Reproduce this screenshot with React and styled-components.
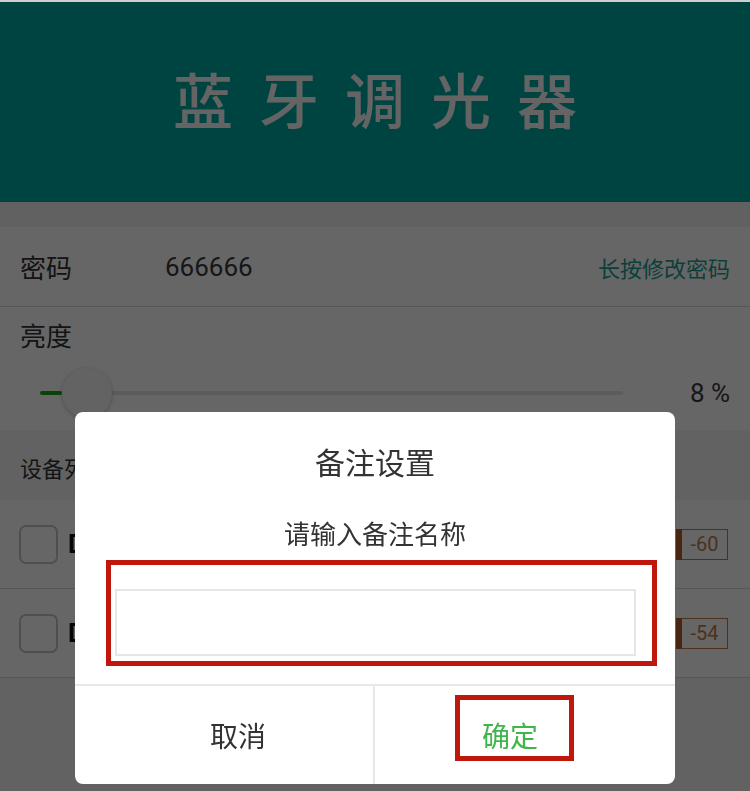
import React from "react";
import styled, { createGlobalStyle } from "styled-components";

const GlobalStyle = createGlobalStyle`
  html, body {
    margin: 0;
    padding: 0;
    background: #f4f4f4;
  }
  body {
    font-family: Roboto, "Noto Sans CJK SC", "Noto Sans", sans-serif;
    color: #333;
  }
  * { box-sizing: border-box; }
`;

const Page = styled.div`
  width: 750px;
  min-height: 791px;
  display: flex;
  flex-direction: column;
  background: #f4f4f4;
  border-top: 2px solid #cfcfcf;
`;

const Header = styled.div`
  height: 200px;
  background: #00aba4;
  display: flex;
  align-items: center;
  justify-content: center;
  padding-bottom: 10px;
`;

const Title = styled.h1`
  margin: 0;
  padding-left: 26px;
  font-family: "Noto Sans CJK SC", sans-serif;
  font-size: 60px;
  font-weight: 500;
  letter-spacing: 26px;
  color: #fafafa;
`;

const Strip = styled.div`
  height: 25px;
  background: #f2f2f2;
`;

const Row = styled.div`
  background: #fff;
  display: flex;
  align-items: center;
  padding: 0 20px;
  height: ${(p) => p.h}px;
  border-bottom: ${(p) => (p.line ? "1px solid #d8d8d8" : "none")};
`;

const Label = styled.span`
  font-family: "Noto Sans CJK SC", sans-serif;
  font-size: 26px;
  color: #333;
  width: 145px;
`;

const Value = styled.span`
  font-family: Roboto, sans-serif;
  font-size: 26px;
  color: #3a3a3a;
  flex: 1;
`;

const Link = styled.span`
  font-family: "Noto Sans CJK SC", sans-serif;
  font-size: 22px;
  color: #1a9e95;
`;

const Brightness = styled.div`
  background: #fff;
  height: 123px;
  padding: 9px 20px 0 20px;
  display: flex;
  flex-direction: column;
`;

const SliderLine = styled.div`
  display: flex;
  align-items: center;
  height: 50px;
  margin-top: 15px;
`;

const Track = styled.div`
  position: relative;
  margin-left: 20px;
  width: 583px;
  height: 4px;
  background: #e6e6e6;
  border-radius: 2px;
`;

const Fill = styled.div`
  height: 4px;
  background: #1aa81a;
  border-radius: 2px;
`;

const Thumb = styled.div`
  position: absolute;
  top: -23px;
  width: 50px;
  height: 50px;
  border-radius: 50%;
  background: #f7f7f7;
  box-shadow: 0 1px 4px rgba(0, 0, 0, 0.25);
`;

const Percent = styled.span`
  margin-left: auto;
  font-family: Roboto, sans-serif;
  font-size: 26px;
  color: #3a3a3a;
`;

const ListHeader = styled.div`
  height: 70px;
  background: #f5f5f5;
  display: flex;
  align-items: center;
  padding: 0 20px;
  font-family: "Noto Sans CJK SC", sans-serif;
  font-size: 22px;
  color: #333;
  padding-top: 4px;
`;

const Checkbox = styled.div`
  width: 39px;
  height: 39px;
  border: 2px solid #c6c6c6;
  border-radius: 7px;
  margin-left: -1px;
`;

const DeviceName = styled.span`
  margin-left: 10px;
  flex: 1;
  font-family: Roboto, sans-serif;
  font-weight: 700;
  font-size: 26px;
  color: #111;
`;

const Rssi = styled.div`
  display: flex;
  height: 31px;
  margin-right: 2px;
`;

const RssiBar = styled.div`
  width: 6px;
  background: #b4602c;
`;

const RssiValue = styled.div`
  width: 46px;
  border: 1px solid #c07a4a;
  border-left: none;
  display: flex;
  align-items: center;
  justify-content: center;
  font-family: Roboto, sans-serif;
  font-size: 20px;
  color: #c07a4a;
`;

const Overlay = styled.div`
  position: fixed;
  top: 2px;
  left: 0;
  right: 0;
  bottom: 0;
  background: rgba(0, 0, 0, 0.6);
  display: flex;
  flex-direction: column;
  align-items: center;
  padding-top: 410px;
`;

const Dialog = styled.div`
  width: 600px;
  height: 372px;
  background: #fff;
  border-radius: 8px;
  display: flex;
  flex-direction: column;
  font-family: "Noto Sans CJK SC", sans-serif;
  overflow: hidden;
`;

const DialogTitle = styled.div`
  margin-top: 30px;
  line-height: 38px;
  font-size: 30px;
  text-align: center;
  color: #333;
`;

const DialogText = styled.div`
  margin-top: 35px;
  line-height: 36px;
  font-size: 26px;
  text-align: center;
  color: #333;
`;

const Mark = styled.div`
  border: 5px solid #c0170c;
`;

const InputMark = styled(Mark)`
  margin: 9px 0 0 31px;
  width: 551px;
  padding: 24px 16px 5px 4px;
`;

const NameInput = styled.input`
  display: block;
  width: 100%;
  height: 67px;
  border: 2px solid #e6e6e6;
  outline: none;
  font-size: 24px;
  padding: 0 12px;
`;

const Buttons = styled.div`
  margin-top: 18px;
  border-top: 2px solid #e8e8e8;
  flex: 1;
  display: flex;
`;

const Button = styled.div`
  flex: 0 0 50%;
  display: flex;
  justify-content: center;
  align-items: ${(p) => (p.primary ? "flex-start" : "center")};
  padding: ${(p) => (p.primary ? "9px 21px 0 0" : "0 0 0 28px")};
  border-right: ${(p) => (p.primary ? "none" : "2px solid #e8e8e8")};
  font-size: 28px;
  line-height: 36px;
  color: ${(p) => (p.primary ? "#3fb54c" : "#333")};
`;

const ButtonMark = styled(Mark)`
  height: 66px;
  padding: 17px 31px 0 22px;
`;

const devices = [
  { name: "DIMMER-01", rssi: -60 },
  { name: "DIMMER-02", rssi: -54 },
];

export default function App() {
  const level = 8;
  return (
    <>
      <GlobalStyle />
      <Page>
        <Header>
          <Title>蓝牙调光器</Title>
        </Header>
        <Strip />
        <Row h={80} line>
          <Label>密码</Label>
          <Value>666666</Value>
          <Link>长按修改密码</Link>
        </Row>
        <Brightness>
          <Label>亮度</Label>
          <SliderLine>
            <Track>
              <Fill style={{ width: `${(level / 100) * 270}px` }} />
              <Thumb style={{ left: `${(level / 100) * 270}px` }} />
            </Track>
            <Percent>{level} %</Percent>
          </SliderLine>
        </Brightness>
        <ListHeader>设备列表</ListHeader>
        {devices.map((d) => (
          <Row key={d.name} h={89} line>
            <Checkbox />
            <DeviceName>{d.name}</DeviceName>
            <Rssi>
              <RssiBar />
              <RssiValue>{d.rssi}</RssiValue>
            </Rssi>
          </Row>
        ))}
      </Page>
      <Overlay>
        <Dialog>
          <DialogTitle>备注设置</DialogTitle>
          <DialogText>请输入备注名称</DialogText>
          <InputMark>
            <NameInput type="text" />
          </InputMark>
          <Buttons>
            <Button>取消</Button>
            <Button primary>
              <ButtonMark>确定</ButtonMark>
            </Button>
          </Buttons>
        </Dialog>
      </Overlay>
    </>
  );
}
